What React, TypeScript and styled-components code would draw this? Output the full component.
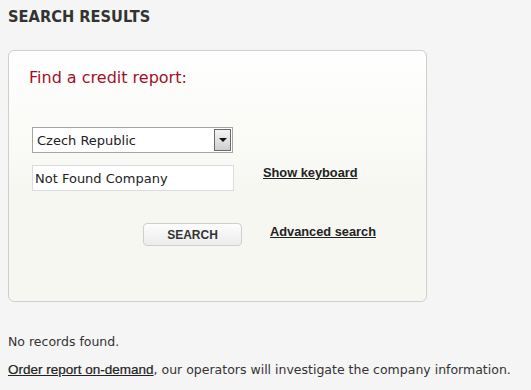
import React from "react";
import styled, { createGlobalStyle } from "styled-components";

const GlobalStyle = createGlobalStyle`
  body {
    margin: 0;
    background: #f5f5f5;
    font-family: "DejaVu Sans", Verdana, sans-serif;
    color: #333;
  }
`;

const Page = styled.div`
  padding: 0 8px;
  width: 515px;
`;

const Title = styled.h1`
  margin: 0;
  padding-top: 7px;
  height: 50px;
  box-sizing: border-box;
  font-family: "DejaVu Sans Condensed", "DejaVu Sans", sans-serif;
  font-weight: bold;
  font-size: 16.3px;
  color: #333;
`;

const Card = styled.div`
  width: 419px;
  height: 252px;
  box-sizing: border-box;
  border: 1px solid #cfcfcf;
  border-radius: 6px;
  background: linear-gradient(#ffffff, #f7f7f2 55%);
  padding: 16px 20px 0 20px;
`;

const CardTitle = styled.h2`
  margin: 0;
  font-weight: normal;
  font-size: 16px;
  color: #a0102a;
  line-height: 22px;
`;

const Form = styled.div`
  margin-top: 38px;
  margin-left: 3px;
  display: grid;
  grid-template-columns: 230px auto;
  row-gap: 12px;
  align-items: center;
`;

const SelectBox = styled.div`
  width: 201px;
  height: 26px;
  box-sizing: border-box;
  border: 1px solid #a5a5a5;
  background: #fff;
  display: flex;
  align-items: center;
  justify-content: space-between;
  padding: 0 1px 0 4px;
  font-size: 13px;
  color: #222;
`;

const Arrow = styled.div`
  width: 17px;
  height: 22px;
  box-sizing: border-box;
  border: 1px solid #6a6a6a;
  background: linear-gradient(#f4f4f4, #cfcfcf);
  display: flex;
  align-items: center;
  justify-content: center;
`;

const TextField = styled.input`
  width: 202px;
  height: 26px;
  box-sizing: border-box;
  border: 1px solid #dcdcdc;
  background: #fff;
  padding: 0 2px;
  font-family: "DejaVu Sans", sans-serif;
  font-size: 13px;
  color: #222;
  outline: none;
`;

const Link = styled.a`
  font-family: "Liberation Sans", Arial, sans-serif;
  font-weight: bold;
  font-size: 12.8px;
  color: #222;
  text-decoration: underline;
  cursor: pointer;
`;

const KeyboardLink = styled(Link)`
  justify-self: start;
  margin-left: 1px;
  margin-top: -12px;
`;

const ActionRow = styled.div`
  margin-top: 32px;
  margin-left: 114px;
  display: flex;
  align-items: center;
  gap: 28px;
`;

const SearchButton = styled.button`
  width: 99px;
  height: 23px;
  border: 1px solid #cfcfcf;
  border-radius: 4px;
  background: linear-gradient(#fdfdfd, #ececec);
  font-family: "Liberation Sans", Arial, sans-serif;
  font-weight: bold;
  font-size: 12px;
  color: #333;
  padding: 0;
`;

const AdvancedLink = styled(Link)`
  margin-top: -7px;
`;

const Message = styled.p`
  margin: 32px 0 0 0;
  font-size: 12.5px;
  color: #333;
`;

const Note = styled.p`
  margin: 13px 0 0 0;
  font-size: 12.5px;
  color: #333;
`;

const NoteLink = styled.a`
  font-family: "Liberation Sans", Arial, sans-serif;
  font-size: 13.5px;
  color: #222;
  text-decoration: underline;
  -webkit-text-stroke: 0.2px #222;
`;

export default function App() {
  return (
    <>
      <GlobalStyle />
      <Page>
        <Title>SEARCH RESULTS</Title>
        <Card>
          <CardTitle>Find a credit report:</CardTitle>
          <Form>
            <SelectBox>
              <span>Czech Republic</span>
              <Arrow>
                <svg width="8" height="4" viewBox="0 0 8 4">
                  <path d="M0 0h8L4 4z" fill="#111" />
                </svg>
              </Arrow>
            </SelectBox>
            <span />
            <TextField defaultValue="Not Found Company" />
            <KeyboardLink>Show keyboard</KeyboardLink>
          </Form>
          <ActionRow>
            <SearchButton>SEARCH</SearchButton>
            <AdvancedLink>Advanced search</AdvancedLink>
          </ActionRow>
        </Card>
        <Message>No records found.</Message>
        <Note>
          <NoteLink>Order report on-demand</NoteLink>, our operators will
          investigate the company information.
        </Note>
      </Page>
    </>
  );
}
